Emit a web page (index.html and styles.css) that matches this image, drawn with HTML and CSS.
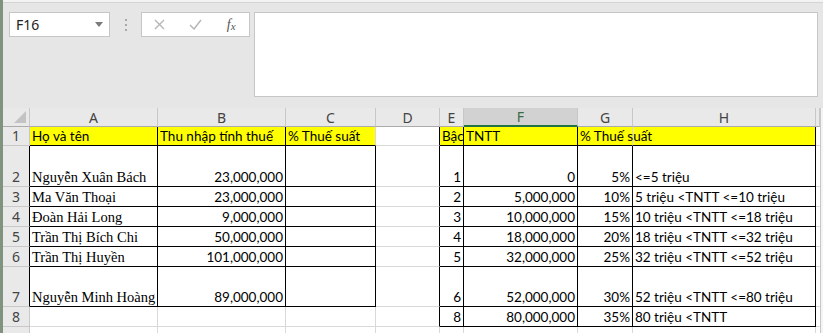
FILE: index.html
```html
<!DOCTYPE html>
<html lang="vi">
<head>
    <meta charset="UTF-8">
    <title>Thuế TNCN</title>
    <link rel="stylesheet" href="styles.css">
</head>
<body>
<div class="app">
    <div class="topbar">
        <div class="namebox">
            <span>F16</span>
            <svg width="8" height="5" viewBox="0 0 8 5"><path d="M0 0h8L4 5z" fill="#7a7a7a"/></svg>
        </div>
        <div class="grip"><i></i><i></i><i></i></div>
        <div class="fbtns">
            <span class="fbtn">
                <svg width="11" height="11" viewBox="0 0 11 11"><path d="M1 1l9 9M10 1l-9 9" stroke="#b4b4b4" stroke-width="1.3" fill="none"/></svg>
            </span>
            <span class="fbtn">
                <svg width="13" height="11" viewBox="0 0 13 11"><path d="M1 6l4 4 7-9" stroke="#b4b4b4" stroke-width="1.4" fill="none"/></svg>
            </span>
            <span class="fbtn fx">f<small>x</small></span>
        </div>
        <div class="fbar"></div>
    </div>

    <div class="sheet-wrap">
        <div class="sheet">
            <!-- column headers -->
            <div class="ch corner"><svg width="12" height="12" viewBox="0 0 12 12"><path d="M12 0v12H0z" fill="#c3c3c3"/></svg></div>
            <div class="ch">A</div>
            <div class="ch">B</div>
            <div class="ch">C</div>
            <div class="ch">D</div>
            <div class="ch">E</div>
            <div class="ch sel">F</div>
            <div class="ch">G</div>
            <div class="ch">H</div>
            <div class="ch"></div>

            <!-- row 1 -->
            <div class="rh">1</div>
            <div class="c y k b">Họ và tên</div>
            <div class="c y k b">Thu nhập tính thuế</div>
            <div class="c y b">% Thuế suất</div>
            <div class="c k"></div>
            <div class="c y k b top">Bậc</div>
            <div class="c y k b">TNTT</div>
            <div class="c y b top">% Thuế suất</div>
            <div class="c y k b"></div>
            <div class="c"></div>

            <!-- row 2 -->
            <div class="rh k">2</div>
            <div class="c n k b">Nguyễn Xuân Bách</div>
            <div class="c r k b">23,000,000</div>
            <div class="c k b"></div>
            <div class="c k"></div>
            <div class="c r k b">1</div>
            <div class="c r k b">0</div>
            <div class="c r k b">5%</div>
            <div class="c k b">&lt;=5 triệu</div>
            <div class="c"></div>

            <!-- row 3 -->
            <div class="rh k">3</div>
            <div class="c n k b">Ma Văn Thoại</div>
            <div class="c r k b">23,000,000</div>
            <div class="c k b"></div>
            <div class="c k"></div>
            <div class="c r k b">2</div>
            <div class="c r k b">5,000,000</div>
            <div class="c r k b">10%</div>
            <div class="c k b">5 triệu &lt;TNTT &lt;=10 triệu</div>
            <div class="c"></div>

            <!-- row 4 -->
            <div class="rh k">4</div>
            <div class="c n k b">Đoàn Hải Long</div>
            <div class="c r k b">9,000,000</div>
            <div class="c k b"></div>
            <div class="c k"></div>
            <div class="c r k b">3</div>
            <div class="c r k b">10,000,000</div>
            <div class="c r k b">15%</div>
            <div class="c k b">10 triệu &lt;TNTT &lt;=18 triệu</div>
            <div class="c"></div>

            <!-- row 5 -->
            <div class="rh k">5</div>
            <div class="c n k b">Trần Thị Bích Chi</div>
            <div class="c r k b">50,000,000</div>
            <div class="c k b"></div>
            <div class="c k"></div>
            <div class="c r k b">4</div>
            <div class="c r k b">18,000,000</div>
            <div class="c r k b">20%</div>
            <div class="c k b">18 triệu &lt;TNTT &lt;=32 triệu</div>
            <div class="c"></div>

            <!-- row 6 -->
            <div class="rh k">6</div>
            <div class="c n k b">Trần Thị Huyền</div>
            <div class="c r k b">101,000,000</div>
            <div class="c k b"></div>
            <div class="c k"></div>
            <div class="c r k b">5</div>
            <div class="c r k b">32,000,000</div>
            <div class="c r k b">25%</div>
            <div class="c k b">32 triệu &lt;TNTT &lt;=52 triệu</div>
            <div class="c"></div>

            <!-- row 7 -->
            <div class="rh k">7</div>
            <div class="c n k b">Nguyễn Minh Hoàng</div>
            <div class="c r k b">89,000,000</div>
            <div class="c k b"></div>
            <div class="c k"></div>
            <div class="c r k b">6</div>
            <div class="c r k b">52,000,000</div>
            <div class="c r k b">30%</div>
            <div class="c k b">52 triệu &lt;TNTT &lt;=80 triệu</div>
            <div class="c"></div>

            <!-- row 8 -->
            <div class="rh">8</div>
            <div class="c"></div>
            <div class="c"></div>
            <div class="c"></div>
            <div class="c k"></div>
            <div class="c r k b">8</div>
            <div class="c r k b">80,000,000</div>
            <div class="c r k b">35%</div>
            <div class="c k b">80 triệu &lt;TNTT</div>
            <div class="c"></div>

            <!-- row 9 (cut off by the window) -->
            <div class="rh"></div>
            <div class="c"></div>
            <div class="c"></div>
            <div class="c"></div>
            <div class="c"></div>
            <div class="c"></div>
            <div class="c"></div>
            <div class="c"></div>
            <div class="c"></div>
            <div class="c"></div>
        </div>
        <div class="vscroll"></div>
    </div>
</div>
</body>
</html>
```

FILE: styles.css
```css
body {
    margin: 0;
    background: #e6e6e6;
    font-family: Lato, "Liberation Sans", sans-serif;
    color: #000;
}
.app {
    height: 333px;
    overflow: hidden;
    border-left: 3px solid #7f937f;
}

/* formula bar area */
.topbar {
    height: 108px;
    box-sizing: border-box;
    padding-top: 12px;
    display: flex;
    align-items: flex-start;
    background: linear-gradient(#f3f3f3 0 2px, #d4d4d4 2px 3px, #e6e6e6 3px);
}
.namebox {
    margin-left: 6px;
    width: 101px;
    height: 25px;
    box-sizing: border-box;
    background: #fff;
    border: 1px solid #c6c6c6;
    display: flex;
    align-items: center;
    justify-content: space-between;
    padding: 0 6px 0 6px;
    font: 14px "Noto Sans", sans-serif;
    color: #222;
}
.grip {
    width: 31px;
    height: 25px;
    display: flex;
    flex-direction: column;
    align-items: center;
    justify-content: center;
    gap: 3px;
}
.grip i {
    width: 2px;
    height: 2px;
    background: #a8a8a8;
}
.fbtns {
    width: 109px;
    height: 25px;
    box-sizing: border-box;
    background: #fff;
    border: 1px solid #c6c6c6;
    display: flex;
    align-items: center;
}
.fbtn {
    width: 36px;
    display: flex;
    justify-content: center;
    align-items: center;
}
.fx {
    font: italic 14px "Liberation Serif", serif;
    color: #555;
}
.fx small {
    font-size: 11px;
    position: relative;
    top: 1px;
}
.fbar {
    flex: 1;
    margin: 0 5px 0 4px;
    height: 85px;
    box-sizing: border-box;
    background: #fff;
    border: 1px solid #c6c6c6;
}

/* sheet */
.sheet-wrap {
    display: flex;
    background: #fff;
}
.sheet {
    display: grid;
    grid-template-columns: 27px 128px 128px 90px 64px 24px 114px 55px 183px 4px;
    grid-template-rows: 19px 19px 41px 20px 20px 20px 20px 40px 20px 20px;
}
.vscroll {
    flex: 1;
    border-left: 1px solid #c8c8c8;
    background: #f4f4f4;
}
.ch, .rh {
    background: #e9e9e9;
    border-right: 1px solid #c8c8c8;
    border-bottom: 1px solid #c8c8c8;
    display: flex;
    align-items: center;
    justify-content: center;
    font: 14px "Noto Sans", sans-serif;
    color: #444;
    box-sizing: border-box;
}
.ch {
    border-bottom-color: #ababab;
}
.rh {
    align-items: flex-end;
    line-height: 19px;
}
.corner {
    align-items: flex-end;
    justify-content: flex-end;
    padding: 0 3px 3px 0;
}
.ch.sel {
    background: #d2d2d2;
    border-bottom: 2px solid #217346;
    color: #3b6a48;
}
.c {
    border-right: 1px solid #d9d9d9;
    border-bottom: 1px solid #d9d9d9;
    box-sizing: border-box;
    display: flex;
    align-items: flex-end;
    padding: 0 2px;
    font-size: 13.5px;
    line-height: 18px;
    white-space: nowrap;
    min-width: 0;
}
.c.y { background: #ffff00; }
.c.r { justify-content: flex-end; }
.c.n {
    font-family: "Liberation Serif", serif;
    font-size: 14.5px;
    line-height: 17px;
}
.c.top { z-index: 1; }
.k { border-right-color: #000; }
.b { border-bottom-color: #000; }
```
